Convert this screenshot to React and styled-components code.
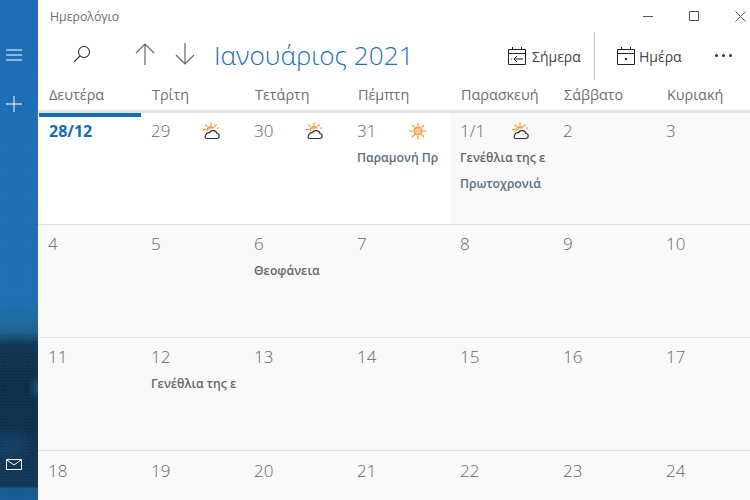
import React from "react";
import styled, { createGlobalStyle } from "styled-components";

const Global = createGlobalStyle`
  html, body { margin: 0; padding: 0; width: 750px; height: 500px; overflow: hidden; background: #fff; }
  body { font-family: "Open Sans", "Noto Sans", "Liberation Sans", sans-serif; }
`;
const Shell = styled.div`display: flex; width: 750px; height: 500px; overflow: hidden;`;
const Sidebar = styled.aside`
  width: 38px; flex: none; height: 500px; display: flex; flex-direction: column; align-items: flex-start; padding-left: 6px; box-sizing: border-box; color: #fff;
  background:
    radial-gradient(circle at 1px 1px, rgba(255,255,255,.025) 1px, transparent 1.2px) 0 0 / 3px 3px,
    radial-gradient(ellipse 10px 14px at 38px 388px, #1a5078 0%, transparent 100%),
    radial-gradient(ellipse 26px 20px at 10px 445px, #124067 0%, transparent 100%),
    linear-gradient(180deg, #1a6db5 0%, #1c6fb2 60%, #1d6a9f 64%, #1d5f8c 66.5%, #0f3550 69%, #0e2d45 78%, #0f3352 90%, #103858 97.4%, #165a90 97.6%, #175c94 100%);
`;
const SideButton = styled.div`height: ${p => p.$h}px; margin-top: ${p => p.$mt || 0}px; margin-bottom: ${p => p.$mb || 0}px; display: flex; align-items: center;`;
const Spacer = styled.div`flex: 1;`;
const Main = styled.main`flex: none; width: 712px; display: flex; flex-direction: column; overflow: hidden; height: 500px;`;
const TitleBar = styled.header`height: 32px; flex: none; display: flex; align-items: center; justify-content: space-between; padding-left: 12px; box-sizing: border-box;`;
const AppName = styled.span`font-size: 12.3px; color: #6d6d6d;`;
const WindowControls = styled.div`display: flex; align-items: center; margin-right: -13px;`;
const WinBtn = styled.div`width: 46px; height: 32px; display: flex; align-items: center; justify-content: center;`;
const Toolbar = styled.div`height: 48px; flex: none; display: flex; align-items: center;`;
const ToolIcon = styled.div`width: ${p => p.$w}px; margin-left: ${p => p.$ml || 0}px; margin-bottom: 4px; display: flex; justify-content: center; flex: none;`;
const Month = styled.h1`margin: 0 0 3px 19px; font-size: 26.2px; font-weight: 300; color: #1a72bb; white-space: nowrap; flex: none; width: 294px;`;
const CmdBtn = styled.div`display: flex; align-items: center; gap: ${p => p.$gap}px; color: #444; font-size: 14px; flex: none; margin-left: ${p => p.$ml || 0}px; width: ${p => p.$w}px;`;
const Divider = styled.div`width: 1px; height: 48px; background: #c4c4c4; flex: none; margin-left: ${p => p.$ml}px;`;
const Dots = styled.div`display: flex; gap: 4px; flex: none; position: relative; top: -1px;`;
const Dot = styled.i`width: 3px; height: 3px; border-radius: 50%; background: #333;`;
const Columns = styled.div`display: grid; grid-template-columns: repeat(7, 103px); width: 721px; flex: none;`;
const DayHeader = styled(Columns)`height: 30px; border-bottom: 3px solid #e6e6e6; box-sizing: content-box;`;
const DayLabel = styled.div`font-size: 14.4px; color: #707070; padding-left: 11px; line-height: 29px; white-space: nowrap;`;
const WeekRow = styled(Columns)`height: ${p => p.$h}px; box-sizing: border-box; border-bottom: 1px solid #e4e4e4;`;
const Cell = styled.div`
  background: ${p => (p.$white ? "#fff" : "#f9f9f9")};
  padding: ${p => p.$top}px 0 0 11px; box-sizing: border-box; min-width: 0; position: relative; overflow: hidden;
`;
const TodayBar = styled.div`position: absolute; left: 1px; right: 0; top: 0; height: 4px; background: #106ebe;`;
const DateLine = styled.div`display: flex; align-items: flex-start; height: 26px;`;
const DateNum = styled.span`font-size: ${p => (p.$today ? 16 : 17)}px; line-height: 24px; color: ${p => (p.$today ? "#106ebe" : "#666")}; font-weight: ${p => (p.$today ? 700 : 300)}; margin-left: ${p => (p.$today ? 0 : -1)}px;`;
const Weather = styled.span`position: absolute; left: 61px; top: 8px;`;
const EventText = styled.div`white-space: nowrap; font-size: 12.2px; font-weight: 600; line-height: 26px; color: ${p => p.$c || "#666"}; margin-left: -1px;`;

const Cloudy = () => (
  <svg width="20" height="20" viewBox="0 0 20 20" fill="none">
    <g stroke="#f0932b" strokeWidth="1.2">
      <path d="M9 1.5v3M3.5 3.5l2 2.2M14.5 3.500l-2 2.200M1 8.500h3M15 7.500l2-.7" />
      <path d="M5 10a4 4 0 0 1 7-3" fill="#f7c48c" />
    </g>
    <path d="M4.500 17.500h10.200c3.300 0 3.300-4.800.3-5-.9-3.500-6.300-3.800-7.500-.8-3.600-.9-6 5.800-3 5.800z" fill="#fff" stroke="#333" strokeWidth="1.200" />
  </svg>
);
const Sunny = () => (
  <svg width="20" height="20" viewBox="0 0 20 20" fill="none">
    <circle cx="10" cy="10" r="4" fill="#f8c591" stroke="#f0932b" strokeWidth="1.200" />
    <path d="M10 1.500v3.500M10 15v3.500M1.500 10H5M15 10h3.500M4 4l2.500 2.500M13.500 13.500L16 16M16 4l-2.500 2.500M6.500 13.500L4 16" stroke="#f0932b" strokeWidth="1.200" />
  </svg>
);

const weeks = [
  { h: 112, top: 6, cells: [
    { n: "28/12", today: true, white: true },
    { n: "29", white: true, w: "c" },
    { n: "30", white: true, w: "c" },
    { n: "31", white: true, w: "s", ev: [["Παραμονή Πρ", "#5c6f82"]] },
    { n: "1/1", w: "c", ev: [["Γενέθλια της ε"], ["Πρωτοχρονιά", "#5c6f82"]] },
    { n: "2" }, { n: "3" },
  ]},
  { h: 113, top: 7, cells: [
    { n: "4" }, { n: "5" }, { n: "6", ev: [["Θεοφάνεια"]] }, { n: "7" }, { n: "8" }, { n: "9" }, { n: "10" },
  ]},
  { h: 113, top: 7, cells: [
    { n: "11" }, { n: "12", ev: [["Γενέθλια της ε"]] }, { n: "13" }, { n: "14" }, { n: "15" }, { n: "16" }, { n: "17" },
  ]},
  { h: 60, top: 8, cells: [
    { n: "18" }, { n: "19" }, { n: "20" }, { n: "21" }, { n: "22" }, { n: "23" }, { n: "24" },
  ]},
];
const days = ["Δευτέρα", "Τρίτη", "Τετάρτη", "Πέμπτη", "Παρασκευή", "Σάββατο", "Κυριακή"];

export default function App() {
  return (
    <>
      <Global />
      <Shell>
        <Sidebar>
          <SideButton $h={16} $mt={47}>
            <svg width="16" height="12" viewBox="0 0 16 12" stroke="#fff" strokeWidth="1"><path d="M0 1h16M0 6h16M0 11h16" /></svg>
          </SideButton>
          <SideButton $h={16} $mt={33}>
            <svg width="16" height="16" viewBox="0 0 16 16" stroke="#fff" strokeWidth="1"><path d="M0 8h16M8 0v16" /></svg>
          </SideButton>
          <Spacer />
          <SideButton $h={12} $mb={30}>
            <svg width="16" height="11" viewBox="0 0 16 11" fill="none" stroke="#fff" strokeWidth="1"><path d="M.5.500h15v10H.5zM1 1l7 5 7-5" /></svg>
          </SideButton>
        </Sidebar>
        <Main>
          <TitleBar>
            <AppName>Ημερολόγιο</AppName>
            <WindowControls>
              <WinBtn><svg width="10" height="10" viewBox="0 0 10 10" stroke="#555"><path d="M0 5.500h10" /></svg></WinBtn>
              <WinBtn><svg width="10" height="10" viewBox="0 0 10 10" fill="none" stroke="#555"><path d="M.5.500h9v9h-9z" /></svg></WinBtn>
              <WinBtn><svg width="11" height="11" viewBox="0 0 11 11" stroke="#555"><path d="M.5.500l10 10M10.500.500l-10 10" /></svg></WinBtn>
            </WindowControls>
          </TitleBar>
          <Toolbar>
            <ToolIcon $w={20} $ml={34}>
              <svg width="18" height="18" viewBox="0 0 18 18" fill="none" stroke="#333" strokeWidth="1.100"><circle cx="11" cy="7" r="5.500" /><path d="M7 11l-6 6" /></svg>
            </ToolIcon>
            <ToolIcon $w={20} $ml={43}>
              <svg width="20" height="22" viewBox="0 0 20 22" fill="none" stroke="#666" strokeWidth="1.200"><path d="M10 22V1M1 10l9-9 9 9" /></svg>
            </ToolIcon>
            <ToolIcon $w={20} $ml={20}>
              <svg width="20" height="22" viewBox="0 0 20 22" fill="none" stroke="#666" strokeWidth="1.200"><path d="M10 0v21M1 12l9 9 9-9" /></svg>
            </ToolIcon>
            <Month>Ιανουάριος 2021</Month>
            <CmdBtn $gap={6} $w={75}>
              <svg width="18" height="18" viewBox="0 0 18 18" fill="none" stroke="#222"><path d="M.5 2.500h17v15H.5zM.5 6.500h17M4.500 0v2.500M13.500 0v2.500M15 12H6M9 9l-3 3 3 3M3 12h.8" /></svg>
              Σήμερα
            </CmdBtn>
            <Divider $ml={11} />
            <CmdBtn $gap={4} $w={98} $ml={22}>
              <svg width="18" height="18" viewBox="0 0 18 18" fill="none" stroke="#222"><path d="M.5 2.500h17v15H.5zM.5 6.500h17M4.500 0v2.500M13.500 0v2.500" /><rect x="8" y="11" width="2" height="2" fill="#222" stroke="none" /></svg>
              Ημέρα
            </CmdBtn>
            <Dots><Dot /><Dot /><Dot /></Dots>
          </Toolbar>
          <DayHeader>{days.map(d => <DayLabel key={d}>{d}</DayLabel>)}</DayHeader>
          {weeks.map((w, i) => (
            <WeekRow key={i} $h={w.h}>
              {w.cells.map(c => (
                <Cell key={c.n} $white={c.white} $top={w.top}>
                  {c.today && <TodayBar />}
                  <DateLine><DateNum $today={c.today}>{c.n}</DateNum></DateLine>
                  {c.w && <Weather>{c.w === "c" ? <Cloudy /> : <Sunny />}</Weather>}
                  {c.ev && c.ev.map(([t, col]) => <EventText key={t} $c={col}>{t}</EventText>)}
                </Cell>
              ))}
            </WeekRow>
          ))}
        </Main>
      </Shell>
    </>
  );
}
